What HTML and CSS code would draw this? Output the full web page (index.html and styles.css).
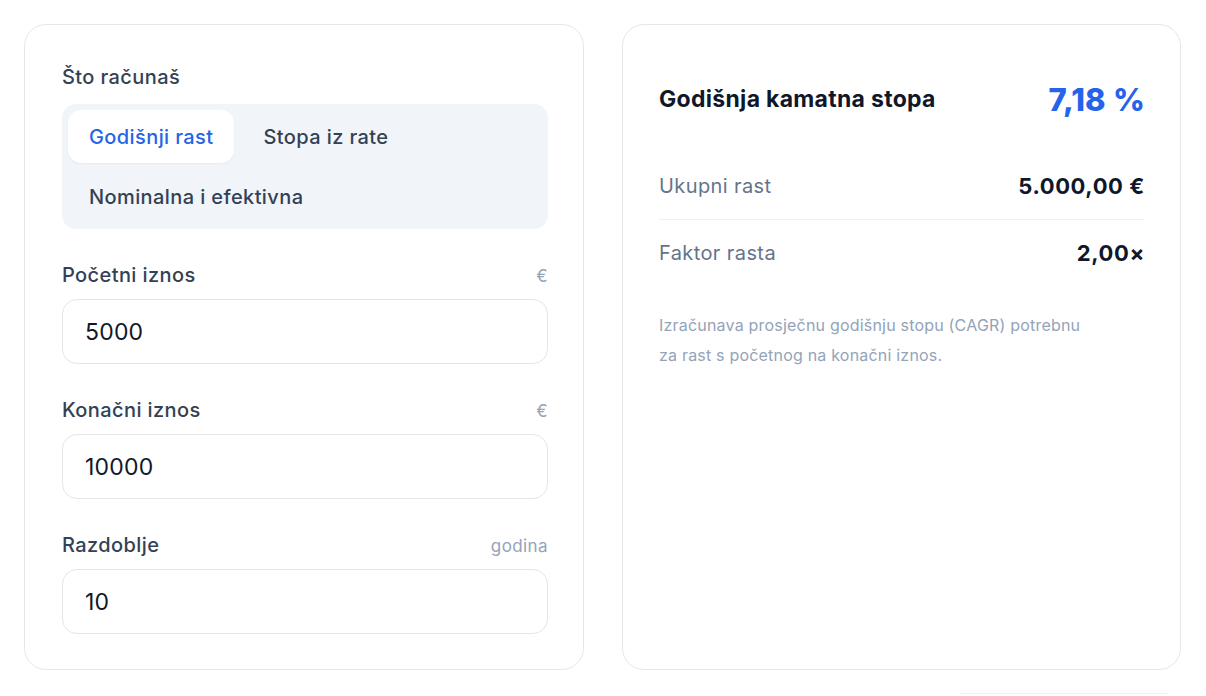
FILE: index.html
```html
<!DOCTYPE html>
<html lang="hr">
<head>
    <meta charset="UTF-8">
    <meta name="viewport" content="width=device-width, initial-scale=1.0">
    <title>Kamatna stopa</title>
    <link rel="stylesheet" href="styles.css">
</head>
<body>
<main class="calc">
    <section class="card inputs">
        <div class="section-label">Što računaš</div>
        <div class="tabs">
            <button class="tab active">Godišnji rast</button>
            <button class="tab">Stopa iz rate</button>
            <button class="tab">Nominalna i efektivna</button>
        </div>

        <div class="field">
            <div class="field-head">
                <label for="start">Početni iznos</label>
                <span class="unit">€</span>
            </div>
            <input id="start" class="input" type="text" value="5000">
        </div>

        <div class="field">
            <div class="field-head">
                <label for="end">Konačni iznos</label>
                <span class="unit">€</span>
            </div>
            <input id="end" class="input" type="text" value="10000">
        </div>

        <div class="field">
            <div class="field-head">
                <label for="years">Razdoblje</label>
                <span class="unit">godina</span>
            </div>
            <input id="years" class="input" type="text" value="10">
        </div>
    </section>

    <section class="card result">
        <div class="result-head">
            <h2>Godišnja kamatna stopa</h2>
            <div class="result-value">7,18 %</div>
        </div>
        <div class="row">
            <span class="row-label">Ukupni rast</span>
            <span class="row-value">5.000,00 €</span>
        </div>
        <div class="row">
            <span class="row-label">Faktor rasta</span>
            <span class="row-value">2,00×</span>
        </div>
        <p class="note">Izračunava prosječnu godišnju stopu (CAGR) potrebnu za rast s početnog na konačni iznos.</p>
    </section>
</main>
<div class="below">
    <div class="below-box"></div>
</div>
</body>
</html>
```

FILE: styles.css
```css
* {
    margin: 0;
    padding: 0;
    box-sizing: border-box;
    font-family: Inter, "Noto Sans", sans-serif;
}
body {
    background: #fff;
    padding: 24px 25px 0 24px;
}
.calc {
    display: grid;
    grid-template-columns: 560px 559px;
    gap: 38px;
}
.card {
    border: 1px solid #e5e7eb;
    border-radius: 22px;
    background: #fff;
    height: 646px;
}
.inputs {
    padding: 38px 35px 0 37px;
}
.section-label {
    font-size: 20px;
    letter-spacing: 0.4px;
    line-height: 28px;
    color: #334155;
    font-weight: 500;
    margin-bottom: 13px;
}
/* Переключатель режимов */
.tabs {
    background: #f1f5f9;
    border-radius: 14px;
    padding: 6px;
    display: flex;
    flex-wrap: wrap;
    gap: 7px 8px;
}
.tab {
    border: none;
    background: transparent;
    font-size: 20px;
    letter-spacing: 0.4px;
    font-weight: 500;
    color: #334155;
    padding: 0 21px;
    height: 53px;
    border-radius: 13px;
    cursor: pointer;
}
.tab.active {
    background: #fff;
    color: #2563eb;
    box-shadow: 0 1px 2px rgba(15, 23, 42, 0.05);
}
.field {
    margin-top: 33px;
}
.field-head {
    display: flex;
    justify-content: space-between;
    align-items: baseline;
    height: 26px;
    margin-bottom: 11px;
}
.field-head label {
    font-size: 20px;
    letter-spacing: 0.4px;
    line-height: 26px;
    font-weight: 500;
    color: #334155;
}
.unit {
    font-size: 17px;
    letter-spacing: 0.4px;
    color: #94a3b8;
}
.input {
    display: block;
    width: 100%;
    height: 65px;
    border: 1px solid #e2e5ea;
    border-radius: 15px;
    padding: 0 22px;
    font-size: 23px;
    letter-spacing: 0.2px;
    color: #111827;
    background: #fff;
    outline: none;
}
/* Результат */
.result {
    padding: 55px 35px 0 36px;
}
.result-head {
    display: flex;
    justify-content: space-between;
    align-items: center;
    height: 38px;
    margin-bottom: 34px;
}
.result-head h2 {
    font-size: 23px;
    letter-spacing: 0.3px;
    font-weight: 700;
    color: #0f172a;
}
.result-value {
    font-size: 31px;
    font-weight: 800;
    letter-spacing: 0.2px;
    color: #2563eb;
}
.row {
    display: flex;
    justify-content: space-between;
    align-items: center;
    height: 67px;
}
.row + .row {
    border-top: 1px solid #eef0f3;
}
.row-label {
    font-size: 20px;
    letter-spacing: 0.4px;
    color: #64748b;
}
.row-value {
    font-size: 22px;
    letter-spacing: 0.6px;
    font-weight: 700;
    color: #0f172a;
}
.note {
    margin-top: 24px;
    font-size: 16px;
    letter-spacing: 0.2px;
    line-height: 30px;
    color: #94a3b8;
    max-width: 440px;
}
.below {
    display: flex;
    justify-content: flex-end;
    padding-right: 13px;
    margin-top: 23px;
}
.below-box {
    width: 208px;
    height: 20px;
    border-top: 1px solid #eef0f3;
}
```
